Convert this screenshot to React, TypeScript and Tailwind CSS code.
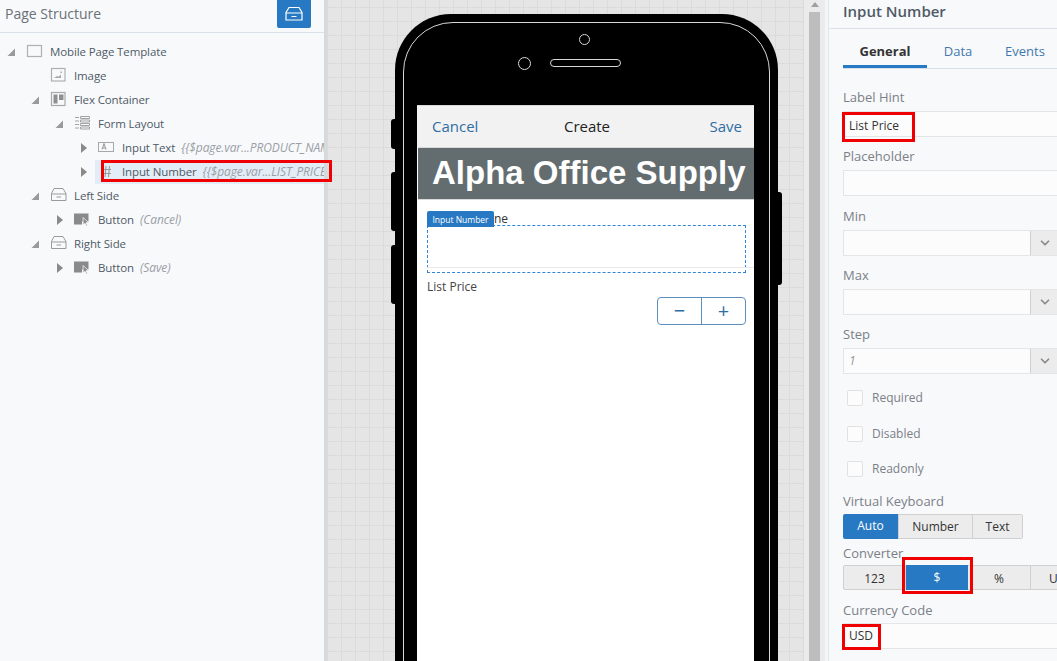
import React from 'react';
import { ChevronDown } from 'lucide-react';

const Open = () => (
  <svg width="10" height="10" viewBox="0 0 10 10" className="shrink-0">
    <path d="M9 1.500V9H1.500z" fill="#9a9a9a" />
  </svg>
);
const Closed = () => (
  <svg width="10" height="12" viewBox="0 0 10 12" className="shrink-0">
    <path d="M3 1l6 5-6 5z" fill="#8a8a8a" />
  </svg>
);

const tray = (
  <>
    <path d="M4 1.500h9l3 5v7H1.500v-7z" fill="none" stroke="#9a9a9a" />
    <path d="M1.500 7H16M6.500 10h4.500" fill="none" stroke="#9a9a9a" />
  </>
);

const icons: Record<string, React.ReactNode> = {
  page: <rect x="1.500" y="2.500" width="14" height="11" fill="none" stroke="#b0b0b0" strokeWidth="1.200" />,
  image: (
    <>
      <rect x="1.500" y="1.500" width="13.500" height="12.500" fill="none" stroke="#b0b0b0" strokeWidth="1.200" />
      <path d="M4 11l3-2 1.500.8L11 7.500V11z" fill="#a8a8a8" />
      <rect x="10.500" y="4.500" width="1.500" height="1.500" fill="#a8a8a8" />
    </>
  ),
  flex: (
    <>
      <rect x="1.500" y="1.500" width="13.500" height="13" fill="none" stroke="#a8a8a8" strokeWidth="1.200" />
      <rect x="3.500" y="3.500" width="4" height="9" fill="#8f8f8f" />
      <rect x="9" y="3.500" width="4.500" height="5.500" fill="#8f8f8f" />
    </>
  ),
  form: <path d="M1 2.500h4M6.500 1.500h9v2h-9zM1 6h4M6.500 5h9v2h-9zM1 9.500h4M6.500 8.500h9v2h-9zM1 13h4M6.500 12h9v2h-9z" fill="none" stroke="#9a9a9a" strokeWidth="0.900" />,
  text: (
    <>
      <rect x="0.500" y="3.500" width="15" height="9" fill="none" stroke="#a8a8a8" />
      <path d="M4 10.500l2-6 2 6M5 9h2" fill="none" stroke="#8a8a8a" strokeWidth="0.900" />
    </>
  ),
  hash: <path d="M8 3L7 14M11.500 3l-1 11M6 6.500h7M6 10.500h7" fill="none" stroke="#9a9a9a" strokeWidth="1.100" />,
  inbox: tray,
  button: (
    <>
      <path d="M0 2.500h14.500v8H8v3H0z" fill="#8a8a8a" />
      <path d="M9 6.500l5.500 5-2.300.3 1.200 2.700-1.100.5-1.200-2.700-2 1.500z" fill="#8a8a8a" stroke="#fff" strokeWidth="0.700" />
    </>
  ),
};

const Row = ({ level, arrow, icon, label, note, active, outlined }: { level: number; arrow?: 'open' | 'closed'; icon: string; label: string; note?: string; active?: boolean; outlined?: boolean }) => (
  <div className="flex h-6 items-center whitespace-nowrap">
    <div className="flex shrink-0 items-center justify-end" style={{ width: 16 + level * 24 }}>
      {arrow === 'open' && <Open />}
      {arrow === 'closed' && <Closed />}
    </div>
    <div className={`relative ml-[7px] flex h-6 min-w-0 flex-1 items-center pl-[3px] ${active ? 'bg-[#e3edf7]' : ''}`}>
      <svg width="18" height="16" viewBox="0 0 18 16" className="-mt-[2px] shrink-0">
        {icons[icon]}
      </svg>
      <span className="ml-[6px] text-[11.500px] tracking-[-0.12px] text-[#4f5a66]">{label}</span>
      {note && <span className="ml-[6px] min-w-0 overflow-hidden text-[12px] tracking-[-0.1px] text-[#9a9fa6] italic">{note}</span>}
      {outlined && <div className="absolute top-0 right-[-8px] bottom-[2px] left-[6px] border-[3px] border-[#f00000]" />}
    </div>
  </div>
);

const Field = ({ label, value, hi, select, italic }: { label: string; value?: string; hi?: boolean; select?: boolean; italic?: boolean }) => (
  <div className="h-[59.300px]">
    <div className="h-[25px] text-[13px] leading-[22px] text-[#7b8087]">{label}</div>
    <div className={`relative flex h-[26px] border border-[#e4e5e7] bg-[#fcfcfc] ${select ? 'w-[218px]' : 'w-[300px]'}`}>
      <div className={`flex-1 pl-[5px] text-[12px] leading-[24px] ${italic ? 'text-[#9a9a9a] italic' : 'text-[#333]'} ${hi ? 'pt-[2px]' : ''}`}>{value}</div>
      {select && (
        <div className="flex w-[30px] items-center justify-center border-l border-[#d0d0d0] bg-[#ececec] pr-[1px]">
          <ChevronDown size={14} strokeWidth={3} className="text-[#8a8a8a]" />
        </div>
      )}
      {hi && <div className="absolute top-0 bottom-[-6px] left-[-2px] w-[73px] border-[3px] border-[#f00000]" />}
    </div>
  </div>
);

const Check = ({ label }: { label: string }) => (
  <div className="flex h-[35.500px] items-center pl-1">
    <div className="h-4 w-4 rounded-[2px] border border-[#e2e2e2] bg-[#fcfcfc]" />
    <span className="ml-[9px] text-[12px] text-[#7b8087]">{label}</span>
  </div>
);

export default function App() {
  return (
    <div className="flex h-[661px] w-[1057px] overflow-hidden bg-[#e5e5e5] font-['Open_Sans','Noto_Sans',sans-serif]">
      {/* left panel */}
      <div className="relative z-10 w-[324px] shrink-0 bg-[#f8f9fb]">
        <div className="flex h-[33px] items-start justify-between border-b border-[#dbe1e8] pr-[13px] pl-[5px]">
          <span className="text-[14px] leading-[28px] text-[#6b7178]">Page Structure</span>
          <div className="flex h-[28px] w-[34px] items-center justify-center rounded-b-[2px] bg-[#2679c2]">
            <svg width="18" height="16" viewBox="0 0 18 16" fill="none" stroke="#fff" strokeWidth="1.200">
              <path d="M4 1.500h10l3 5v7.500H1V6.500zM1 7h16M6.500 10.500h5" />
            </svg>
          </div>
        </div>
        <div className="pt-[7px]">
          <Row level={0} arrow="open" icon="page" label="Mobile Page Template" />
          <Row level={1} icon="image" label="Image" />
          <Row level={1} arrow="open" icon="flex" label="Flex Container" />
          <Row level={2} arrow="open" icon="form" label="Form Layout" />
          <Row level={3} arrow="closed" icon="text" label="Input Text" note="{{$page.var...PRODUCT_NAME}}" />
          <Row level={3} arrow="closed" icon="hash" label="Input Number" note="{{$page.var...LIST_PRICE}}" active outlined />
          <Row level={1} arrow="open" icon="inbox" label="Left Side" />
          <Row level={2} arrow="closed" icon="button" label="Button" note="(Cancel)" />
          <Row level={1} arrow="open" icon="inbox" label="Right Side" />
          <Row level={2} arrow="closed" icon="button" label="Button" note="(Save)" />
        </div>
      </div>
      <div className="w-[3px] shrink-0 bg-[#d3dbdb]" />

      {/* canvas */}
      <div className="relative w-[477px] shrink-0 overflow-hidden bg-[#e5e5e5] bg-[linear-gradient(#dbdbdb_1px,transparent_1px),linear-gradient(90deg,#dbdbdb_1px,transparent_1px)] bg-[size:14px_14px] bg-[position:0_7px] pt-[14px] pl-[68px]">
        <div className="absolute top-[119px] left-[64px] h-[30px] w-[6px] rounded-l-[3px] bg-black" />
        <div className="absolute top-[172px] left-[64px] h-[59px] w-[6px] rounded-l-[3px] bg-black" />
        <div className="absolute top-[245px] left-[64px] h-[59px] w-[6px] rounded-l-[3px] bg-black" />
        <div className="absolute top-[192px] left-[449px] h-[93px] w-[6px] rounded-r-[3px] bg-black" />

        <div className="relative h-[700px] w-[383px] rounded-t-[56px] bg-black px-[8px] pt-[8px]">
          <div className="h-[700px] rounded-t-[50px] border border-[#d8d8d8] px-[13px] pt-[82px]">
            <div className="absolute top-[20px] left-[184px] h-[11px] w-[11px] rounded-full border border-[#d8d8d8]" />
            <div className="absolute top-[43px] left-[123px] h-[13px] w-[13px] rounded-full border border-[#d8d8d8]" />
            <div className="absolute top-[45px] left-[155px] h-[8px] w-[71px] rounded-full border border-[#d8d8d8]" />

            {/* device screen */}
            <div className="relative h-[600px] w-[337px] bg-white">
              <div className="grid h-[42px] grid-cols-3 items-center border-t border-[#d9d9d9] bg-[#f2f2f2] pr-3 pl-[15px] text-[15px]">
                <span className="text-[#2f6ea5]">Cancel</span>
                <span className="text-center text-[#222]">Create</span>
                <span className="text-right text-[#2f6ea5]">Save</span>
              </div>
              <div className="ml-[1px] h-[53px] border-y border-[#d9d9d9] bg-[#636d70] pl-[14px] font-['Liberation_Sans',Arial,sans-serif] text-[33px] leading-[49px] font-bold whitespace-nowrap text-white">
                Alpha Office Supply
              </div>
              <div className="pt-[11px] pr-[8px] pl-[10px]">
                <div className="relative">
                  <div className="pl-[67px] text-[12px] leading-[16px] text-[#333]">ne</div>
                  <div className="absolute top-0 left-0 z-10 h-4 w-[67px] rounded-t-[2px] bg-[#2679c2] text-center text-[8.500px] leading-[17px] text-white">Input Number</div>
                  <div className="mt-[-2px] h-[48px] border border-dashed border-[#2f86d8]" />
                  <div className="absolute top-[56px] right-[-8px] left-0 h-px bg-[#e8e8e8]" />
                </div>
                <div className="mt-[5px] text-[12px] leading-[18px] text-[#444]">List Price</div>
                <div className="mt-[1px] flex justify-end">
                  <div className="flex h-7 w-[89px] rounded-[4px] border border-[#5a8fbd] text-[#2f6ea5]">
                    <div className="flex flex-1 items-center justify-center border-r border-[#5a8fbd] text-[20px]">−</div>
                    <div className="flex flex-1 items-center justify-center text-[20px]">+</div>
                  </div>
                </div>
              </div>
            </div>
          </div>
        </div>
      </div>

      {/* scrollbar */}
      <div className="flex w-[21px] shrink-0 flex-col bg-[#ebebeb] px-[5px]">
        <div className="flex h-3 items-start justify-center pt-[2px]">
          <svg width="8" height="5" viewBox="0 0 8 5">
            <path d="M4 0l4 5H0z" fill="#a0a0a0" />
          </svg>
        </div>
        <div className="w-full flex-1 bg-[#bdbdbd]" />
      </div>
      <div className="w-[3px] shrink-0 bg-[#f5f6f8]" />

      {/* property panel */}
      <div className="min-w-0 flex-1 overflow-hidden border-l border-[#e4e6e9] bg-[#f8f9fb]">
        <div className="h-[29px] border-b border-[#dbe1e8] pl-[14px] text-[15px] leading-[22px] font-semibold text-[#4f5a66]">Input Number</div>
        <div className="ml-[14px] flex h-[40px] w-[300px] border-b border-[#d7e0e9] text-[13px]">
          <div className="w-[84px] border-b-[3px] border-[#2679c2] pt-[13px] text-center font-bold text-[#333]">General</div>
          <div className="w-[62px] pt-[13px] text-center text-[#3f78ad]">Data</div>
          <div className="w-[72px] pt-[13px] text-center text-[#3f78ad]">Events</div>
        </div>
        <div className="ml-[14px] w-[300px] pt-[17px]">
          <Field label="Label Hint" value="List Price" hi />
          <Field label="Placeholder" />
          <Field label="Min" select />
          <Field label="Max" select />
          <Field label="Step" value="1" select italic />
          <div className="mt-[-2px]">
            <Check label="Required" />
            <Check label="Disabled" />
            <Check label="Readonly" />
          </div>
          <div className="mt-[4px] text-[13px] leading-[20px] text-[#7b8087]">Virtual Keyboard</div>
          <div className="mt-[3px] flex h-[25px] text-[12px] leading-[24px]">
            <div className="w-[55px] rounded-l-[2px] bg-[#2679c2] text-center text-white">Auto</div>
            <div className="w-[75px] border border-[#d0d0d0] bg-[#ececec] text-center text-[#333]">Number</div>
            <div className="w-[50px] rounded-r-[2px] border border-l-0 border-[#d0d0d0] bg-[#ececec] text-center text-[#333]">Text</div>
          </div>
          <div className="mt-[4px] text-[13px] leading-[20px] text-[#7b8087]">Converter</div>
          <div className="mt-[2px] flex h-[25px] text-[12px] leading-[25px]">
            <div className="w-[63px] rounded-l-[2px] border border-[#d0d0d0] bg-[#ececec] text-center text-[#333]">123</div>
            <div className="relative w-[62px] bg-[#2679c2] text-center text-white">
              $
              <div className="absolute top-[-8px] right-[-5px] bottom-[-4px] left-[-4px] border-[3.500px] border-[#f00000]" />
            </div>
            <div className="w-[63px] border border-l-0 border-[#d0d0d0] bg-[#ececec] text-center text-[#333]">%</div>
            <div className="w-[62px] border border-l-0 border-[#d0d0d0] bg-[#ececec] pl-[18px] text-[#333]">Unit</div>
          </div>
          <div className="mt-[10px] text-[13px] leading-[20px] text-[#7b8087]">Currency Code</div>
          <div className="relative mt-[3px] flex h-[26px] border border-[#e4e5e7] bg-[#fcfcfc] pl-[5px] text-[12px] leading-[24px] text-[#333]">
            USD
            <div className="absolute top-0 bottom-[-2px] left-[-2px] w-[39px] border-[3px] border-[#f00000]" />
          </div>
        </div>
      </div>
    </div>
  );
}
